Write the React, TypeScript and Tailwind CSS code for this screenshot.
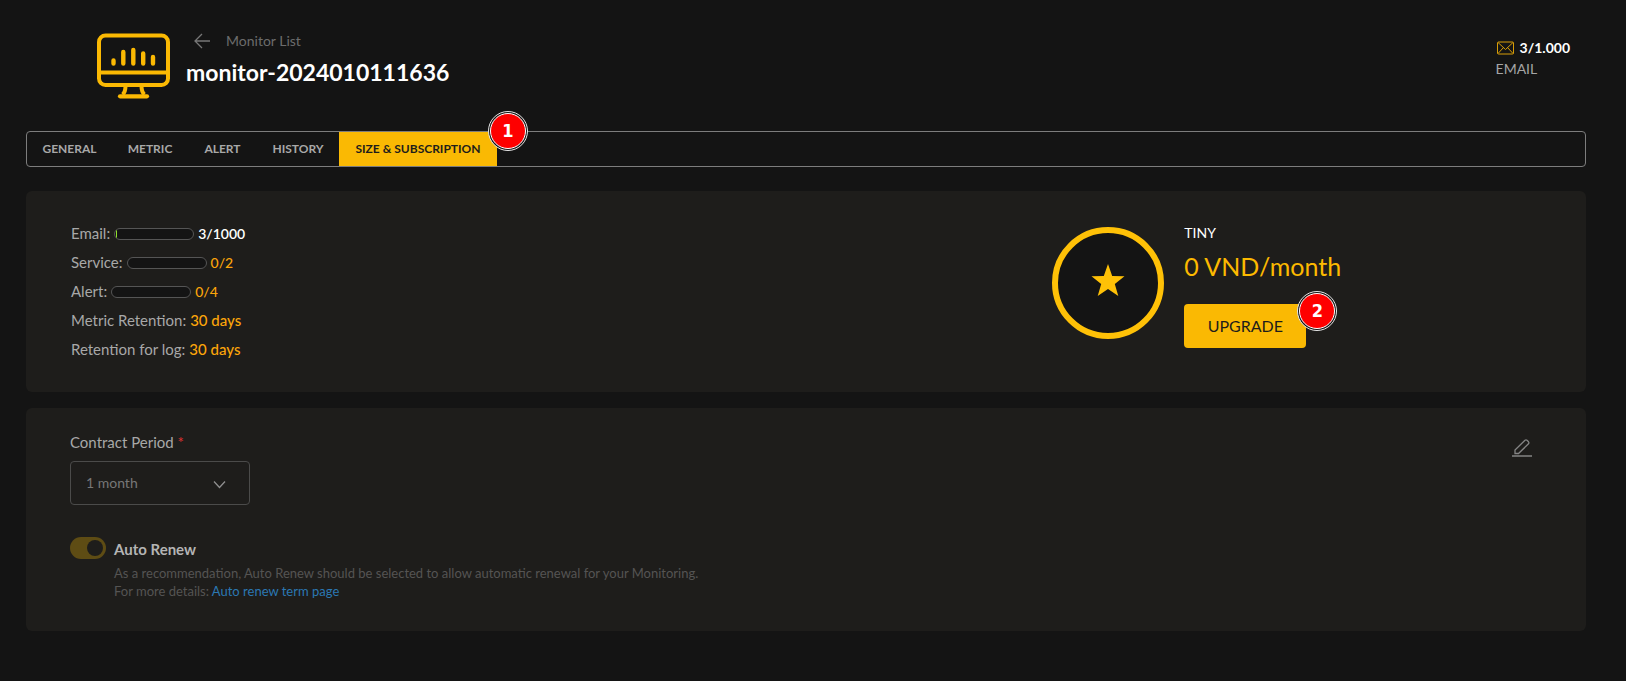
import { useState } from "react";
import clsx from "clsx";

interface Quota {
  label: string;
  used: number;
  limit: number;
  highlight?: boolean;
}

const tabs = [
  { label: "GENERAL", width: "min-w-[85px]" },
  { label: "METRIC", width: "min-w-[76px]" },
  { label: "ALERT", width: "min-w-[69px]" },
  { label: "HISTORY", width: "min-w-[82px]" },
  { label: "SIZE & SUBSCRIPTION", width: "min-w-[158px]" },
];

const quotas: Quota[] = [
  { label: "Email", used: 3, limit: 1000, highlight: true },
  { label: "Service", used: 0, limit: 2 },
  { label: "Alert", used: 0, limit: 4 },
];

const retentions = [
  { label: "Metric Retention", value: "30 days" },
  { label: "Retention for log", value: "30 days" },
];

function MonitorIcon() {
  return (
    <svg width="74" height="66" viewBox="0 0 74 66" fill="none" stroke="#fbb903" aria-hidden="true">
      <rect x="2" y="2.500" width="69" height="49.500" rx="6.500" strokeWidth="4" />
      <path d="M2 39.500h69" strokeWidth="4" />
      <path d="M28.500 53c0 5-1 7-3 8.500M44.500 53c0 5 1 7 3 8.500" strokeWidth="4" />
      <path d="M23 63.300h27" strokeWidth="4.200" strokeLinecap="round" />
      <path
        d="M16.500 27.500v3M26.300 19v11.500M36.300 17v13.500M46.200 20.500v10M56 24v6.500"
        strokeWidth="4.400"
        strokeLinecap="round"
      />
    </svg>
  );
}

function Marker({ value, className }: { value: number; className: string }) {
  return (
    <span
      className={clsx(
        "pointer-events-none absolute -right-[31px] z-10 flex h-10 w-10 items-center justify-center rounded-full border border-[#e8e8e8] bg-[#141414] p-px",
        className
      )}
    >
      <span className="flex h-full w-full items-center justify-center rounded-full border border-white bg-[#fe0000] font-['DejaVu_Sans_Condensed','DejaVu_Sans',sans-serif] text-lg font-bold text-white">
        {value}
      </span>
    </span>
  );
}

function Header() {
  return (
    <header className="flex items-start justify-between pl-[71px] pr-4 pt-[33px]">
      <div className="flex gap-[15px]">
        <MonitorIcon />
        <div className="-mt-0.5">
          <a href="#monitors" className="flex h-5 items-center gap-4 pl-2 text-sm text-[#6c6c6c]">
            <svg width="16" height="16" viewBox="0 0 16 16" fill="none" stroke="#777" strokeWidth="1.300" aria-hidden="true">
              <path d="M8 1 1 8l7 7M1 8h15" />
            </svg>
            Monitor List
          </a>
          <h1 className="mt-[5px] text-[23px] font-bold leading-8 text-white">monitor-2024010111636</h1>
        </div>
      </div>
      <div className="pt-[5px]">
        <div className="flex h-5 items-center gap-1.5 text-sm font-bold text-white">
          <svg width="18" height="14" viewBox="0 0 18 14" fill="none" stroke="#d79d08" aria-hidden="true">
            <rect x="1.500" y="1" width="16" height="12" rx="1" />
            <path d="M2 1.500l7.500 7 7.500-7M2 12.500l5.500-6M17 12.500l-5.500-6" />
          </svg>
          3/1.000
        </div>
        <div className="text-sm leading-[22px] text-[#a5a5a5]">EMAIL</div>
      </div>
    </header>
  );
}

function TabBar() {
  const [active, setActive] = useState("SIZE & SUBSCRIPTION");

  return (
    <nav className="mt-8 flex h-9 rounded border border-[#7d7d7d]">
      {tabs.map((tab) => (
        <div key={tab.label} className="relative flex">
          <button
            type="button"
            onClick={() => setActive(tab.label)}
            className={clsx(
              "whitespace-nowrap text-xs font-bold",
              tab.width,
              active === tab.label ? "bg-[#fab903] text-[#1e1d1b]" : "text-[#a8a8a8]"
            )}
          >
            {tab.label}
          </button>
          {tab.label === "SIZE & SUBSCRIPTION" && <Marker value={1} className="-top-[21px]" />}
        </div>
      ))}
    </nav>
  );
}

function QuotaRow({ label, used, limit, highlight }: Quota) {
  return (
    <li className="flex h-[29px] items-center gap-1">
      <span>{label}:</span>
      <div
        role="progressbar"
        aria-label={label}
        aria-valuenow={used}
        aria-valuemax={limit}
        className="h-3 w-20 overflow-hidden rounded-full border border-[#555] bg-[#141414] pl-px"
      >
        {used > 0 && (
          <div className="h-full min-w-px bg-[#8fe02a]" style={{ width: `${(used / limit) * 100}%` }} />
        )}
      </div>
      <span className={highlight ? "text-sm font-semibold text-white" : "text-sm font-medium text-[#fca50a]"}>
        {used}/{limit}
      </span>
    </li>
  );
}

function PlanPanel() {
  return (
    <section className="mt-6 grid grid-cols-3 rounded-md bg-[#1e1d1b] pb-7 pl-[45px] pr-[43px] pt-9">
      <ul className="col-span-2 -mt-2 text-[15px] text-[#a8a8a8]">
        {quotas.map((quota) => (
          <QuotaRow key={quota.label} {...quota} />
        ))}
        {retentions.map((item) => (
          <li key={item.label} className="flex h-[29px] items-center gap-1">
            <span>{item.label}:</span>
            <span className="font-medium text-[#fca50a]">{item.value}</span>
          </li>
        ))}
      </ul>
      <div className="flex items-start gap-5">
        <div className="flex h-28 w-28 shrink-0 items-center justify-center rounded-full border-[6px] border-[#ffc107] bg-[#141414] pb-1">
          <svg width="34" height="34" viewBox="0 0 34 34" fill="#ffc107" aria-hidden="true">
            <path d="m17 0 4.200 12 12.300.300-9.700 7.700 3.500 12L17 24.900 6.700 32l3.500-12L.5 12.300l12.300-.300z" />
          </svg>
        </div>
        <div className="-mt-1">
          <div className="text-sm text-white">TINY</div>
          <div className="mt-[7px] whitespace-nowrap text-[25px] leading-8 text-[#fcb900]">0 VND/month</div>
          <div className="relative mt-[22px] w-[122px]">
            <button type="button" className="h-11 w-full rounded bg-[#fab903] text-base text-[#1e1d1b]">
              UPGRADE
            </button>
            <Marker value={2} className="-top-[13px]" />
          </div>
        </div>
      </div>
    </section>
  );
}

function ContractPanel() {
  const [autoRenew, setAutoRenew] = useState(true);

  return (
    <section className="mt-4 flex items-start justify-between rounded-md bg-[#1e1d1b] pb-[31px] pl-11 pr-[54px] pt-6">
      <div>
        <label htmlFor="period" className="block text-[15px] leading-5 text-[#a8a8a8]">
          Contract Period <span className="text-[#e03131]">*</span>
        </label>
        <div className="relative mt-[9px] w-[180px]">
          <select
            id="period"
            defaultValue="1"
            className="h-11 w-full appearance-none rounded border border-[#4b4b4a] bg-transparent px-[15px] text-sm text-[#777]"
          >
            <option value="1">1 month</option>
            <option value="3">3 months</option>
            <option value="12">12 months</option>
          </select>
          <svg
            className="pointer-events-none absolute right-6 top-[19px]"
            width="13"
            height="9"
            viewBox="0 0 13 9"
            fill="none"
            stroke="#8f8f8f"
            strokeWidth="1.300"
            aria-hidden="true"
          >
            <path d="m1 1.500 5.500 6 5.500-6" />
          </svg>
        </div>
        <div className="mt-8 flex items-start gap-2">
          <input
            id="auto-renew"
            type="checkbox"
            role="switch"
            checked={autoRenew}
            onChange={(e) => setAutoRenew(e.target.checked)}
            className="h-[22px] w-9 shrink-0 appearance-none rounded-full bg-[#444] p-[3px] before:block before:h-4 before:w-4 before:rounded-full before:bg-[#1e1d1b] checked:bg-[#5e4c14] checked:before:ml-auto"
          />
          <div className="text-[13px] leading-[18px] text-[#555453]">
            <label htmlFor="auto-renew" className="block pt-0.5 text-[15px] font-bold leading-5 text-[#b4b4b4]">
              Auto Renew
            </label>
            <p className="mt-[5px]">
              As a recommendation, Auto Renew should be selected to allow automatic renewal for your Monitoring.
            </p>
            <p>
              For more details:{" "}
              <a href="#terms" className="text-[#2b78b3]">
                Auto renew term page
              </a>
            </p>
          </div>
        </div>
      </div>
      <button type="button" aria-label="Edit contract" className="mt-[7px]">
        <svg width="20" height="18" viewBox="0 0 20 18" fill="none" stroke="#858585" aria-hidden="true">
          <path d="M3 14.500v-3.500L13 1.300q1-.800 2 0l1.500 1.500q.800 1 0 2L6.500 14.500z" strokeWidth="1.300" />
          <path d="M0 17h20" strokeWidth="1.500" />
        </svg>
      </button>
    </section>
  );
}

export default function App() {
  return (
    <main className="min-h-screen bg-[#141414] pb-12 pl-[26px] pr-10 font-[Lato,sans-serif]">
      <Header />
      <TabBar />
      <PlanPanel />
      <ContractPanel />
    </main>
  );
}
